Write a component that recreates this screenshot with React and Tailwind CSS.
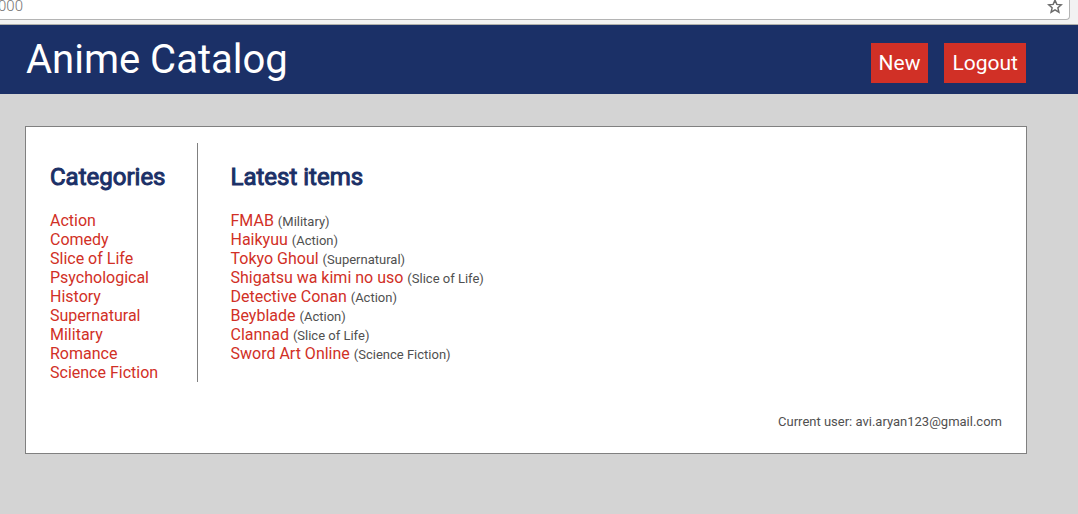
import React from 'react';

const categories = [
  'Action',
  'Comedy',
  'Slice of Life',
  'Psychological',
  'History',
  'Supernatural',
  'Military',
  'Romance',
  'Science Fiction',
];

const items = [
  ['FMAB', 'Military'],
  ['Haikyuu', 'Action'],
  ['Tokyo Ghoul', 'Supernatural'],
  ['Shigatsu wa kimi no uso', 'Slice of Life'],
  ['Detective Conan', 'Action'],
  ['Beyblade', 'Action'],
  ['Clannad', 'Slice of Life'],
  ['Sword Art Online', 'Science Fiction'],
];

function AddressBar() {
  return (
    <div className="border-b border-[#b0b0ab] bg-[#f2f2f2] pr-2 pb-1">
      <div className="flex h-5 items-start overflow-hidden rounded-br border-r border-b border-[#b4b4b4] bg-white pr-1.5">
        <input
          type="text"
          aria-label="Address"
          defaultValue="000"
          className="-ml-0.5 h-3 min-w-0 flex-1 bg-transparent font-[Roboto,sans-serif] text-[15px] leading-3 font-light text-[#757575] outline-none"
        />
        <button type="button" aria-label="Bookmark this page" className="h-3.5 w-4">
          <svg viewBox="0 0 16 14" className="block h-3.5 w-4" fill="none" stroke="#6b6b6b" strokeWidth="1.5">
            <path d="M8 0.2 L9.8 4.4 L14.3 4.8 L10.9 7.8 L11.9 12.2 L8 9.9 L4.1 12.2 L5.1 7.8 L1.7 4.8 L6.2 4.4 Z" />
          </svg>
        </button>
      </div>
    </div>
  );
}

function SectionTitle({ children }) {
  return (
    <h2 className="text-2xl leading-7 font-normal text-[#1b3067] [-webkit-text-stroke:1px_#1b3067]">
      {children}
    </h2>
  );
}

export default function App() {
  return (
    <div className="min-h-screen bg-[#d4d4d4] font-[Roboto,sans-serif] text-base text-[#505050]">
      <AddressBar />
      <header className="flex items-start justify-between bg-[#1b3067] pt-[11px] pr-[52px] pb-[11px] pl-[26px] text-white">
        <h1 className="text-[40px] leading-[47px]">Anime Catalog</h1>
        <nav className="flex gap-4 pt-[7px]">
          <a href="#new" className="bg-[#d13026] px-2 text-[21px] leading-10">New</a>
          <a href="#logout" className="bg-[#d13026] px-2 text-[21px] leading-10">Logout</a>
        </nav>
      </header>
      <main className="mt-8 mr-[51px] ml-[25px] border border-[#808080] bg-white px-6 pt-4 pb-[23px]">
        <div className="flex">
          <section className="border-r border-[#808080] pt-5 pr-[31px]">
            <SectionTitle>Categories</SectionTitle>
            <ul className="mt-5 leading-[19px]">
              {categories.map((name) => (
                <li key={name}>
                  <a href="#category" className="text-[#d13026]">{name}</a>
                </li>
              ))}
            </ul>
          </section>
          <section className="flex-1 pt-5 pl-[33px]">
            <SectionTitle>Latest items</SectionTitle>
            <ul className="mt-5 leading-[19px]">
              {items.map(([name, category]) => (
                <li key={name}>
                  <a href="#item" className="text-[#d13026]">{name}</a>{' '}
                  <span className="text-[13px] leading-4">({category})</span>
                </li>
              ))}
            </ul>
          </section>
        </div>
        <p className="mt-8 text-right text-[13px] leading-4">Current user: avi.aryan123@gmail.com</p>
      </main>
    </div>
  );
}
